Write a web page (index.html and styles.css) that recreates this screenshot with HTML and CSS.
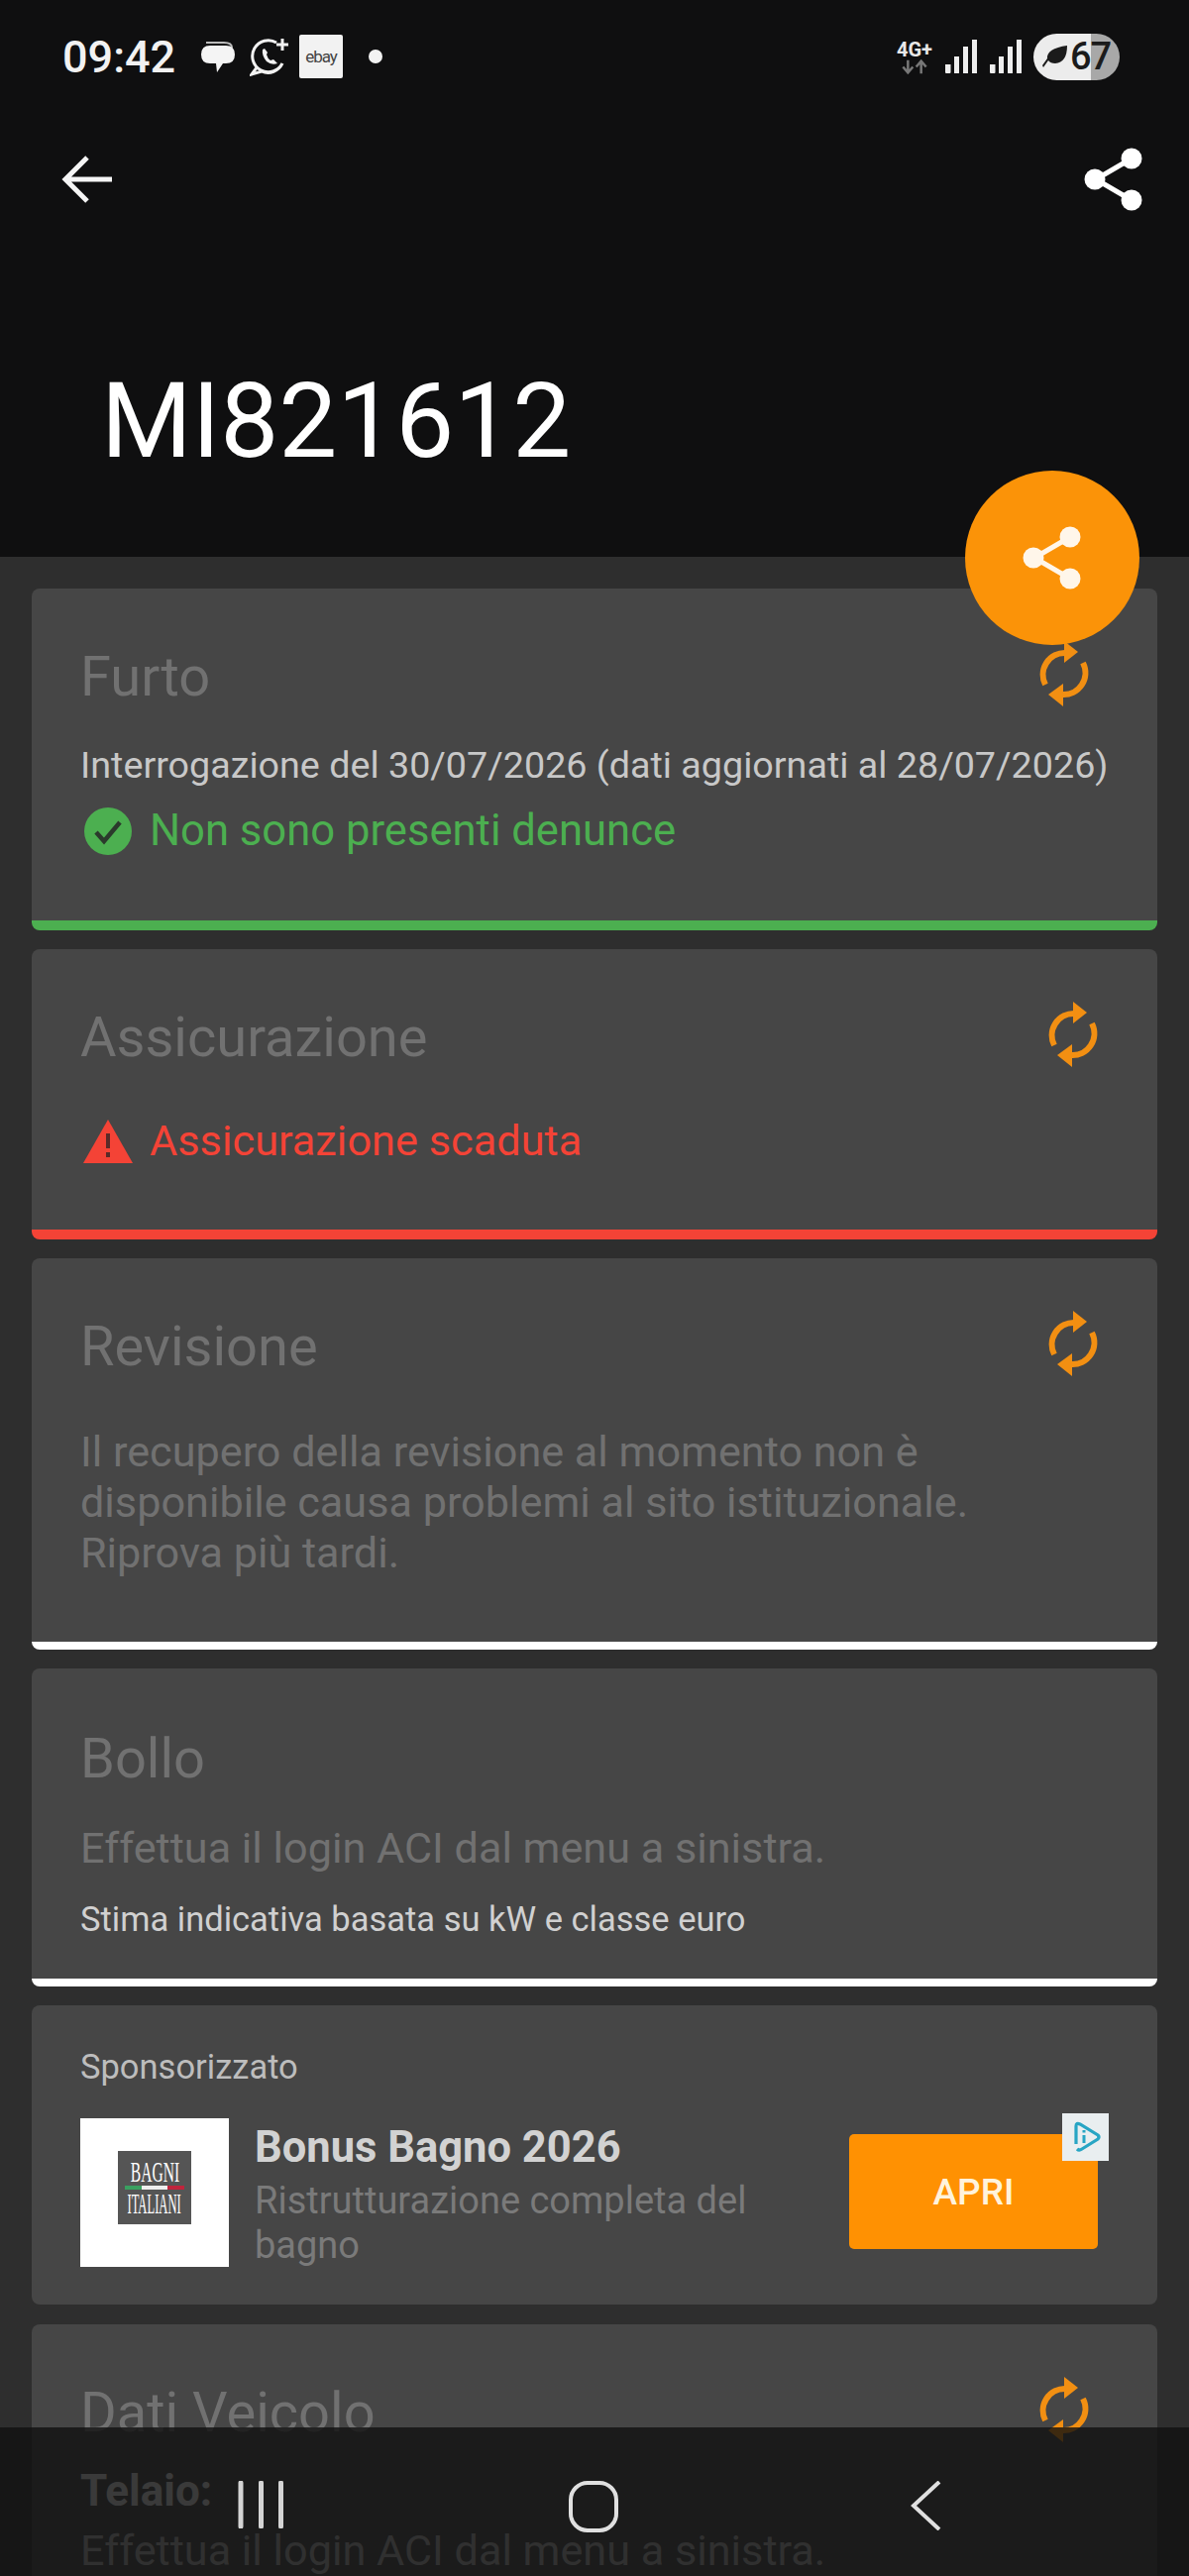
FILE: index.html
```html
<!DOCTYPE html>
<html lang="it">
  <head>
    <meta charset="UTF-8" />
    <meta name="viewport" content="width=device-width, initial-scale=1.0" />
    <title>MI821612</title>
    <link rel="stylesheet" href="styles.css">
  </head>
  <body>
    <svg class="defs" width="0" height="0">
      <symbol id="i-sync" viewBox="0 0 60 70">
        <path d="M12 46 A22 22 0 0 1 32 14" fill="none" stroke="currentColor" stroke-width="6" stroke-linecap="butt" />
        <path d="M31 2 L45 13 L31 24 Z" fill="currentColor" />
        <path d="M50 24 A22 22 0 0 1 29 56" fill="none" stroke="currentColor" stroke-width="6" stroke-linecap="butt" />
        <path d="M30 45 L15 56 L30 68 Z" fill="currentColor" />
      </symbol>
      <symbol id="i-share" viewBox="0 0 60 64">
        <path d="M48 11 L12 32 L48 53" fill="none" stroke="currentColor" stroke-width="5" />
        <circle cx="48" cy="11" r="10.5" fill="currentColor" />
        <circle cx="11" cy="32" r="10.5" fill="currentColor" />
        <circle cx="48" cy="53" r="10.5" fill="currentColor" />
      </symbol>
      <symbol id="i-bars" viewBox="0 0 32 34">
        <path d="M0 25 H5.5 V33 Q5.5 34 4.5 34 H1 Q0 34 0 33 Z M9 17 H14 V34 H9 Z M18 7 H23 V34 H18 Z M27 0 H32 V34 H27 Z" fill="#eee" />
      </symbol>
    </svg>

    <header class="top">
      <div class="statusbar">
        <span class="clock">09:42</span>
        <svg class="ic-msg" viewBox="0 0 36 34">
          <path d="M6 3 H24 Q32 3 32 8" fill="none" stroke="#bbb" stroke-width="2" />
          <path d="M10 6 H26 Q35 6 35 15 Q35 24 26 24 H23 L17 33 L16 24 H10 Q1 24 1 15 Q1 6 10 6 Z" fill="#f4f4f4" />
        </svg>
        <svg class="ic-wa" viewBox="0 0 40 40">
          <path d="M27 6 A16 16 0 1 0 33 27 M8 30 L2 38 L12 35 A16 16 0 0 0 33 27" fill="none" stroke="#f2f2f2" stroke-width="3" />
          <path d="M13 13 Q12 19 17 25 Q22 29 28 27 L24 23 L21 24 Q18 22 17 18 L18 16 L15 12 Z" fill="#f2f2f2" />
          <path d="M33 2 V14 M27 8 H39" stroke="#f2f2f2" stroke-width="3" />
        </svg>
        <span class="ebay">ebay</span>
        <span class="dot"></span>
        <span class="status-right">
          <span class="net">
            <span class="net-label">4G+</span>
            <svg class="net-arrows" viewBox="0 0 36 16">
              <path d="M10 0 V14 M4 8 L10 15 L16 8 M26 16 V2 M20 8 L26 1 L32 8" fill="none" stroke="#777" stroke-width="3" />
            </svg>
          </span>
          <svg class="bars"><use href="#i-bars" /></svg>
          <svg class="bars"><use href="#i-bars" /></svg>
          <span class="battery">
            <svg class="leaf" viewBox="0 0 26 24"><path d="M25 1 Q25 18 13 19 Q8 19 6 16 L1 23 L0 21 L5 14 Q4 4 25 1 Z" fill="#1b1b1b" /></svg>
            <span class="battery-num">67</span>
          </span>
        </span>
      </div>
      <div class="toolbar">
        <svg class="back" viewBox="0 0 52 50"><path d="M26 3 L4 25 L26 47 M4 25 H51" fill="none" stroke="#f5f5f5" stroke-width="5" /></svg>
        <svg class="share"><use href="#i-share" /></svg>
      </div>
      <h1 class="plate">MI821612</h1>
    </header>

    <button class="fab"><svg class="fab-icon"><use href="#i-share" /></svg></button>

    <main class="list">
      <section class="card card-ok">
        <div class="card-head">
          <h2 class="card-title">Furto</h2>
          <svg class="sync sync-left"><use href="#i-sync" /></svg>
        </div>
        <p class="meta">Interrogazione del 30/07/2026 (dati aggiornati al 28/07/2026)</p>
        <div class="state state-ok">
          <svg class="state-icon" viewBox="0 0 48 48">
            <circle cx="24" cy="24" r="24" fill="#4caf50" />
            <path d="M12 25 L20 34 L36 15" fill="none" stroke="#2b3a2c" stroke-width="4.5" />
          </svg>
          <span>Non sono presenti denunce</span>
        </div>
      </section>

      <section class="card card-bad">
        <div class="card-head">
          <h2 class="card-title">Assicurazione</h2>
          <svg class="sync"><use href="#i-sync" /></svg>
        </div>
        <div class="state state-bad">
          <svg class="state-icon" viewBox="0 0 50 44">
            <path d="M25 0 L50 44 H0 Z" fill="#f44336" />
            <path d="M23 14 H27 V29 H23 Z M23 33 H27 V38 H23 Z" fill="#5a2a28" />
          </svg>
          <span>Assicurazione scaduta</span>
        </div>
      </section>

      <section class="card card-plain card-rev">
        <div class="card-head">
          <h2 class="card-title">Revisione</h2>
          <svg class="sync"><use href="#i-sync" /></svg>
        </div>
        <p class="muted muted-rev">Il recupero della revisione al momento non è<br />disponibile causa problemi al sito istituzionale.<br />Riprova più tardi.</p>
      </section>

      <section class="card card-plain card-bollo">
        <h2 class="card-title">Bollo</h2>
        <p class="muted muted-bollo">Effettua il login ACI dal menu a sinistra.</p>
        <p class="note">Stima indicativa basata su kW e classe euro</p>
      </section>

      <section class="card card-ad">
        <p class="ad-label">Sponsorizzato</p>
        <div class="ad-row">
          <div class="ad-thumb">
            <div class="ad-logo">
              <span class="ad-logo-line ad-logo-top">BAGNI</span>
              <span class="ad-flag"></span>
              <span class="ad-logo-line ad-logo-bottom">ITALIANI</span>
            </div>
          </div>
          <div class="ad-text">
            <div class="ad-title">Bonus Bagno 2026</div>
            <div class="ad-desc">Ristrutturazione completa del bagno</div>
          </div>
          <button class="ad-btn">APRI</button>
        </div>
        <span class="adchoice">
          <svg viewBox="0 0 32 34">
            <path d="M6 24 V6 Q6 2 10 4 L28 15 Q30 17 28 19 L12 29 Q9 31 7 29" fill="none" stroke="#27a5c4" stroke-width="3.2" />
            <path d="M14 15 V23 M14 10 V12.5" fill="none" stroke="#27a5c4" stroke-width="3" />
          </svg>
        </span>
      </section>

      <section class="card card-vehicle">
        <div class="card-head">
          <h2 class="card-title">Dati Veicolo</h2>
          <svg class="sync sync-left"><use href="#i-sync" /></svg>
        </div>
        <div class="field">Telaio:</div>
        <p class="muted muted-vehicle">Effettua il login ACI dal menu a sinistra.</p>
      </section>
    </main>

    <nav class="navbar">
      <svg class="nav-recent" viewBox="0 0 50 48"><path d="M3 2 V46 M23.5 2 V46 M43.5 2 V46" stroke="#d4d4d4" stroke-width="5" stroke-linecap="round" /></svg>
      <svg class="nav-home" viewBox="0 0 50 52"><rect x="2" y="2" width="46" height="48" rx="17" fill="none" stroke="#e0e0e0" stroke-width="4" /></svg>
      <svg class="nav-back" viewBox="0 0 32 50"><path d="M29 1 L3 25 L29 49" fill="none" stroke="#e0e0e0" stroke-width="4" /></svg>
    </nav>
  </body>
</html>
```

FILE: styles.css
```css
html,
body {
  margin: 0;
  height: 2600px;
  overflow: hidden;
}
body {
  position: relative;
  background-color: #2e2e2e;
  font-family: Roboto, "Liberation Sans", sans-serif;
  color: #c8c8c8;
}
h1,
h2,
p {
  margin: 0;
  font-weight: 400;
}
.defs {
  display: block;
  height: 0;
}

/* header */
.top {
  height: 562px;
  background-color: #0f0f10;
  box-sizing: border-box;
}
.statusbar {
  display: flex;
  align-items: center;
  height: 50px;
  padding: 32px 70px 0 63px;
}
.clock {
  width: 117px;
  font-size: 45px;
  font-weight: 500;
  color: #f2f2f2;
  white-space: nowrap;
}
.ic-msg {
  width: 36px;
  height: 34px;
  margin-left: 22px;
}
.ic-wa {
  width: 40px;
  height: 40px;
  margin-left: 14px;
}
.ebay {
  width: 44px;
  height: 44px;
  margin-left: 10px;
  border-radius: 2px;
  background-color: #f2f2f2;
  color: #444;
  font-size: 17px;
  line-height: 44px;
  text-align: center;
  letter-spacing: -1px;
}
.dot {
  width: 14px;
  height: 14px;
  margin-left: 26px;
  border-radius: 50%;
  background-color: #f2f2f2;
}
.status-right {
  display: flex;
  align-items: center;
  margin-left: auto;
}
.net {
  display: flex;
  flex-direction: column;
  align-items: center;
  width: 38px;
  margin-right: 12px;
}
.net-label {
  font-size: 20px;
  line-height: 20px;
  font-weight: 700;
  color: #e8e8e8;
}
.net-arrows {
  width: 30px;
  height: 15px;
}
.bars {
  width: 32px;
  height: 34px;
  margin-right: 13px;
}
.battery {
  display: flex;
  align-items: center;
  justify-content: center;
  width: 87px;
  height: 47px;
  margin-left: -1px;
  border-radius: 24px;
  background: linear-gradient(90deg, #ececec 67%, #a8a8a8 67%);
  color: #1b1b1b;
}
.leaf {
  width: 26px;
  height: 24px;
  margin-right: 2px;
}
.battery-num {
  font-size: 38px;
  font-weight: 500;
  letter-spacing: -1px;
}
.toolbar {
  display: flex;
  align-items: center;
  justify-content: space-between;
  padding: 67px 46px 0 62px;
  color: #fff;
}
.back {
  width: 52px;
  height: 50px;
}
.share {
  width: 60px;
  height: 64px;
}
.plate {
  margin: 155px 0 0 102px;
  font-size: 105px;
  line-height: 116px;
  color: #fff;
}
.fab {
  position: absolute;
  left: 974px;
  top: 475px;
  z-index: 2;
  display: flex;
  align-items: center;
  justify-content: center;
  width: 176px;
  height: 176px;
  padding: 0;
  border: none;
  border-radius: 50%;
  background-color: #fb9308;
}
.fab-icon {
  width: 60px;
  height: 64px;
  color: #fff6ea;
}

/* cards */
.list {
  display: flex;
  flex-direction: column;
  gap: 19px;
  padding: 32px 32px 0;
}
.card {
  position: relative;
  box-sizing: border-box;
  padding: 60px 50px 0 49px;
  border-radius: 8px;
  background-color: #464646;
  flex: none;
}
.card-ok {
  height: 345px;
  border-bottom: 10px solid #4caf50;
}
.card-bad {
  height: 293px;
  border-bottom: 10px solid #f44336;
}
.card-plain {
  border-bottom: 8px solid #fff;
}
.card-rev {
  height: 395px;
}
.card-bollo {
  height: 321px;
  padding-top: 62px;
}
.card-ad {
  height: 302px;
  padding-top: 42px;
}
.card-vehicle {
  height: 300px;
  margin-top: 1px;
}
.card-head {
  display: flex;
  align-items: center;
  justify-content: space-between;
}
.card-title {
  font-size: 56px;
  line-height: 58px;
  color: #717171;
}
.sync {
  width: 60px;
  height: 70px;
  margin: -9px 6px -3px 0;
  color: #f28f12;
}
.sync-left {
  margin-right: 15px;
}
.meta {
  margin-top: 37px;
  font-size: 37.7px;
  line-height: 46px;
  white-space: nowrap;
}
.state {
  display: flex;
  align-items: center;
  gap: 17px;
  font-size: 43.3px;
  line-height: 50px;
}
.card-ok .state {
  margin-top: 19px;
  font-size: 43.6px;
}
.card-bad .state {
  margin-top: 51px;
}
.state-icon {
  width: 50px;
  height: 48px;
  margin-left: 3px;
}
.state-ok {
  color: #4caf50;
}
.state-bad {
  color: #f44336;
}
.muted {
  font-size: 43.2px;
  line-height: 51px;
  color: #717171;
}
.muted-rev {
  margin-top: 52px;
}
.muted-bollo {
  margin-top: 36px;
}
/* sits under the dark bottom bar, so it has to be lighter to show through */
.muted-vehicle {
  color: #b0b0b0;
}
.note {
  margin-top: 24px;
  font-size: 34.5px;
  line-height: 44px;
  color: #d0d0d0;
}

/* sponsored */
.ad-label {
  font-size: 34.5px;
  line-height: 40px;
  color: #bdbdbd;
}
.ad-row {
  display: flex;
  align-items: flex-start;
  margin-top: 32px;
}
.ad-thumb {
  display: flex;
  align-items: center;
  justify-content: center;
  flex: none;
  width: 150px;
  height: 150px;
  padding-bottom: 10px;
  box-sizing: border-box;
  background-color: #fff;
}
.ad-logo {
  display: flex;
  flex-direction: column;
  align-items: center;
  justify-content: center;
  width: 74px;
  height: 74px;
  background-color: #555;
  color: #fff;
  font-family: "Liberation Serif", serif;
}
.ad-logo-line {
  font-size: 30px;
  line-height: 28px;
  white-space: nowrap;
}
.ad-logo-top {
  transform: scaleX(0.52);
}
.ad-logo-bottom {
  transform: scaleX(0.42);
}
.ad-flag {
  width: 60px;
  height: 4px;
  background: linear-gradient(90deg, #3aa060 28%, #eee 28% 72%, #c0243c 72%);
}
.ad-text {
  flex: none;
  width: 560px;
  margin: 0 40px 0 26px;
  padding-top: 8px;
}
.ad-title {
  font-size: 43.5px;
  line-height: 44px;
  font-weight: 700;
  color: #d2d2d2;
}
.ad-desc {
  margin-top: 9px;
  font-size: 38px;
  line-height: 45px;
  color: #7a7a7a;
}
.ad-btn {
  flex: none;
  width: 251px;
  height: 116px;
  margin: 16px 0 0 0;
  padding: 0;
  border: none;
  border-radius: 5px;
  background-color: #ff9102;
  color: #fff3dc;
  font-family: Roboto, "Liberation Sans", sans-serif;
  font-size: 37px;
  font-weight: 500;
}
.adchoice {
  position: absolute;
  right: 49px;
  top: 109px;
  display: flex;
  align-items: center;
  justify-content: center;
  width: 47px;
  height: 48px;
  background-color: #e9eef0;
}
.adchoice svg {
  width: 32px;
  height: 34px;
}
.field {
  margin: 24px 0 9px;
  font-size: 44px;
  line-height: 52px;
  font-weight: 700;
  color: #e0e0e0;
}

/* bottom bar */
.navbar {
  position: absolute;
  left: 0;
  right: 0;
  top: 2450px;
  bottom: 0;
  z-index: 3;
  background-color: rgba(16, 16, 16, 0.8);
}
.nav-recent,
.nav-home,
.nav-back {
  position: absolute;
  top: 54px;
}
.nav-recent {
  left: 240px;
  width: 50px;
  height: 48px;
}
.nav-home {
  left: 574px;
  width: 50px;
  height: 52px;
}
.nav-back {
  left: 919px;
  width: 32px;
  height: 50px;
}
```
